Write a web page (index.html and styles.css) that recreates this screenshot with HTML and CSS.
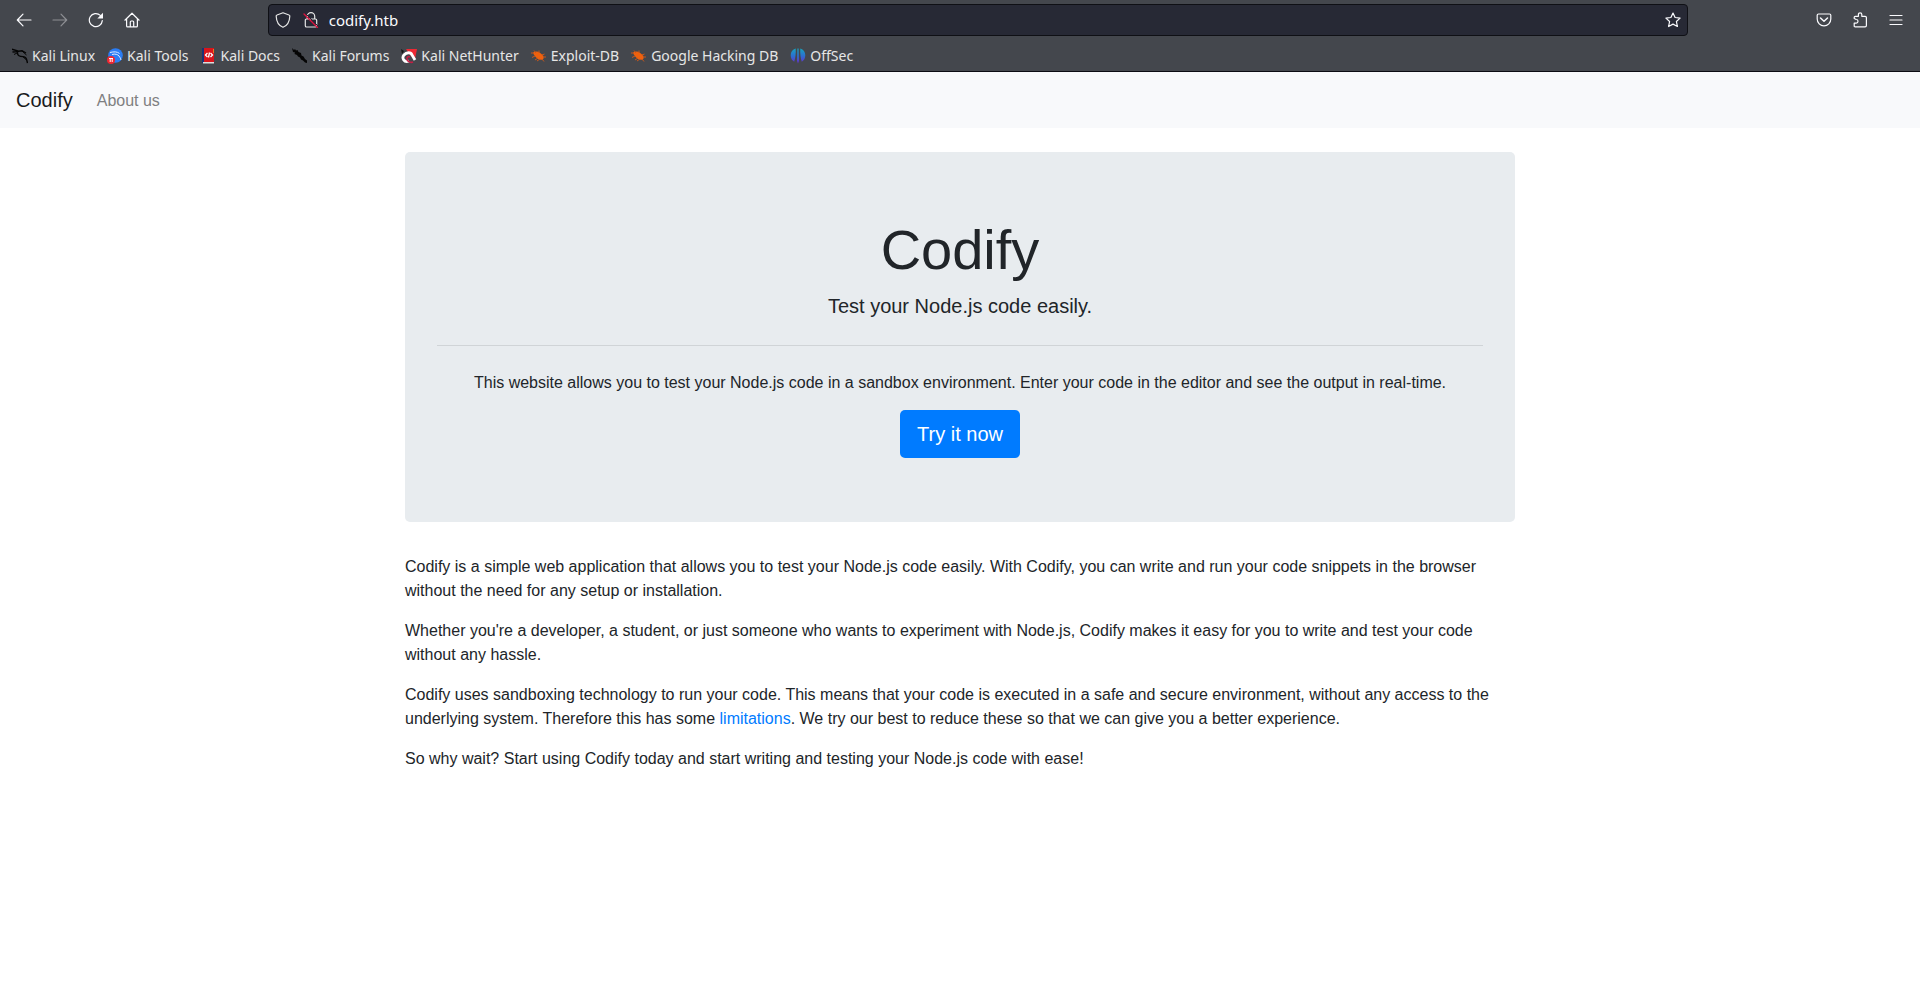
FILE: index.html
```
<!DOCTYPE html>
<html lang="en">
<head>
<meta charset="utf-8">
<title>Codify</title>
<link rel="stylesheet" href="styles.css">
</head>
<body>
<header class="browser">
  <div class="toolbar">
    <button class="tool" aria-label="Back"><svg class="icon" viewBox="0 0 16 16"><path d="M15 8H1.5M7 2.2 1.3 8 7 13.8"/></svg></button>
    <button class="tool tool-off" aria-label="Forward"><svg class="icon" viewBox="0 0 16 16"><path d="M1 8h13.500M9 2.200 14.700 8 9 13.800"/></svg></button>
    <button class="tool" aria-label="Reload"><svg class="icon" viewBox="0 0 16 16"><path d="M14.300 8.600A6.500 6.500 0 1 1 12.300 3.400"/><path class="solid" d="M15 .8V6.500H9.300z"/></svg></button>
    <button class="tool" aria-label="Home"><svg class="icon" viewBox="0 0 16 16"><path d="M.9 8.200 8 1.200l7.100 7M2.600 7v6.900c0 .6.400 1 1 1h8.800c.6 0 1-.4 1-1V7M6.300 14.800V10c0-.6.400-1 1-1h1.400c.6 0 1 .4 1 1v4.800"/></svg></button>
    <div class="spacer"></div>
    <form class="url">
      <svg class="icon" viewBox="0 0 16 16"><path d="M8 .8 14 3c.6.200.9.700.8 1.200C14.600 9.500 12.500 13.500 8 15.300 3.500 13.500 1.400 9.500 1.200 4.200 1.100 3.700 1.400 3.200 2 3z"/></svg>
      <svg class="icon icon-lock" viewBox="0 0 16 16"><path d="M4.300 7V4.300a3.700 3.700 0 0 1 7.400 0V7M3.600 7h8.800c.9 0 1.300.4 1.300 1.300v5.400c0 .9-.4 1.300-1.300 1.300H3.600c-.9 0-1.300-.4-1.300-1.300V8.300C2.300 7.400 2.700 7 3.600 7z"/><path class="gap" d="M2.500 1.500 15.500 14.500"/><path class="slash" d="M1 2 14.500 15.500"/></svg>
      <input class="address" type="text" value="codify.htb" aria-label="Address">
      <button class="star" type="button" aria-label="Bookmark this page"><svg class="icon" viewBox="0 0 16 16"><path d="m8 1 2.100 4.500 5 .6-3.700 3.400 1 5L8 12.100l-4.400 2.400 1-5L.9 6.100l5-.6z"/></svg></button>
    </form>
    <div class="spacer"></div>
    <button class="tool" aria-label="Save to Pocket"><svg class="icon" viewBox="0 0 16 16"><path d="M2.500 2h11c.8 0 1.300.5 1.300 1.300V7a6.800 6.800 0 0 1-13.600 0V3.300C1.200 2.500 1.700 2 2.500 2z"/><path d="M4.500 6 8 9.300 11.500 6" stroke-width="1.500"/></svg></button>
    <button class="tool" aria-label="Extensions"><svg class="icon" viewBox="0 0 16 16"><path d="M2.200 6.500V5.300c0-.6.400-1 1-1h3.200V2.500a1.700 1.700 0 0 1 3.400 0v1.800h3.300c.8 0 1.300.5 1.300 1.300v8c0 .8-.5 1.300-1.300 1.300H3.200c-.6 0-1-.4-1-1v-2.800h2a1.800 1.800 0 0 0 0-3.600z"/></svg></button>
    <button class="tool" aria-label="Open menu"><svg class="icon" viewBox="0 0 16 16"><path d="M2 3.500h12M2 8h12M2 12.500h12"/></svg></button>
  </div>
  <nav class="bookmarks" aria-label="Bookmarks">
    <a class="bookmark" href="#"><svg class="favicon" viewBox="0 0 16 16" fill="none" stroke="#050505"><path stroke-width="1.400" d="M0 1.200 6.500 3.200 10 2.700 14 5M.5 4l6-.5M5.500 4C5 8 8 8.500 11 8.600c3 .2 3.500 2 4.500 6.400"/><path d="m2 6.500 4-2M10 3l4.500 4M11 8.800l3 2.700"/></svg>Kali Linux</a>
    <a class="bookmark" href="#"><svg class="favicon" viewBox="0 0 16 16"><circle cx="8.500" cy="7.500" r="7.300" fill="#2a7df5"/><path d="M3 4.500c4-1 7-1 9.500 1M5 6.500c3-1 6 0 7 1.500s1.500 2 2 4" fill="none" stroke="#dcebff"/><circle cx="4" cy="12" r="4" fill="#ee2631"/><path d="M2 10.500h4M3.200 10.500V14M5.200 10.500V14" fill="none" stroke="#fff"/></svg>Kali Tools</a>
    <a class="bookmark" href="#"><svg class="favicon" viewBox="0 0 16 16"><path fill="#1a3276" d="M1 0h3v15H1z"/><path fill="#d9141b" d="M3 0h10v15H3z"/><path fill="#ed791d" d="M12 1h1v4h-1z"/><path fill="#ddd" d="M2 14h11v1.500H2z"/><path d="M6.500 5 4.500 7l2 2M9.500 5l2 2-2 2M8.500 4.500 7.500 9.500" fill="none" stroke="#fff" stroke-width="1.300"/></svg>Kali Docs</a>
    <a class="bookmark" href="#"><svg class="favicon" viewBox="0 0 16 16"><path fill="#050505" d="M0 0 2 2l1-1 1 1.500L5.500 2l1 2L9 5l.5 2.500 2 1L13 11l2 1.500V15l-2-.5-2-2-2-1-1-2-2-1L5 7 2.500 6 3 4.500 1 4z"/></svg>Kali Forums</a>
    <a class="bookmark" href="#"><svg class="favicon" viewBox="0 0 16 16"><path fill="#ed2934" d="M5 1h11l-2 10-5-4z"/><path fill="#151515" d="m0 1 3 2-2 3z"/><path d="M8 13C3 15 .5 10 3 7s7-3 8 0l3 5" fill="none" stroke="#fff" stroke-width="2.800"/><path d="M9 9c-2-1-3 0-3 2s3 4 6 3" fill="none" stroke="#c61e45" stroke-width="1.700"/></svg>Kali NetHunter</a>
    <a class="bookmark" href="#"><svg class="favicon" viewBox="0 0 16 16"><path d="M2 4.500C6 2 9 4 12 7.500c.8 1.500 1 3.500-.5 4C8 12.500 4 10 2 4.500z" fill="#ef610e"/><path d="m5 5-2-2.500M8 5V2.500M11 7l2.500-1M12 9h3M11 11l2 2.500M7 10l-3 2M4 8 1 9.500M3 5H0M9 11l-3 2" fill="none" stroke="#c9571a" stroke-width="1"/></svg>Exploit-DB</a>
    <a class="bookmark" href="#"><svg class="favicon" viewBox="0 0 16 16"><path d="M2 4.500C6 2 9 4 12 7.500c.8 1.500 1 3.500-.5 4C8 12.500 4 10 2 4.500z" fill="#ef610e"/><path d="m5 5-2-2.500M8 5V2.500M11 7l2.500-1M12 9h3M11 11l2 2.500M7 10l-3 2M4 8 1 9.500M3 5H0M9 11l-3 2" fill="none" stroke="#c9571a" stroke-width="1"/></svg>Google Hacking DB</a>
    <a class="bookmark" href="#"><svg class="favicon" viewBox="0 0 16 16"><defs><linearGradient id="off" gradientUnits="userSpaceOnUse" x1="0" y1="0" x2="0" y2="16"><stop offset="0" stop-color="#16a7bd"/><stop offset=".5" stop-color="#2c6fd0"/><stop offset="1" stop-color="#6d27c9"/></linearGradient></defs><path fill="url(#off)" d="M5.700.5C2.500 1.200.7 4 .7 7.300c0 3 1.300 5.200 3.500 6.500C5.500 10 6 5 5.700.5zM10.300.5c3.200.7 5 3.500 5 6.800 0 3-1.300 5.200-3.500 6.500C10.500 10 10 5 10.300.5zM7.400.5h1.200L9 13l-1 2.500L7 13z"/></svg>OffSec</a>
  </nav>
</header>
<nav class="navbar">
  <a class="brand" href="#">Codify</a>
  <a class="nav-link" href="#">About us</a>
</nav>
<main class="container">
  <section class="jumbotron">
    <h1 class="title">Codify</h1>
    <p class="lead">Test your Node.js code easily.</p>
    <hr class="rule">
    <p>This website allows you to test your Node.js code in a sandbox environment. Enter your code in the editor and see the output in real-time.</p>
    <a class="btn" href="#">Try it now</a>
  </section>
  <p>Codify is a simple web application that allows you to test your Node.js code easily. With Codify, you can write and run your code snippets in the browser without the need for any setup or installation.</p>
  <p>Whether you're a developer, a student, or just someone who wants to experiment with Node.js, Codify makes it easy for you to write and test your code without any hassle.</p>
  <p>Codify uses sandboxing technology to run your code. This means that your code is executed in a safe and secure environment, without any access to the underlying system. Therefore this has some <a class="link" href="#">limitations</a>. We try our best to reduce these so that we can give you a better experience.</p>
  <p>So why wait? Start using Codify today and start writing and testing your Node.js code with ease!</p>
</main>
</body>
</html>
```
FILE: styles.css
```
*, *::before, *::after { box-sizing: border-box; }

body {
  margin: 0;
  background: #fff;
  color: #212529;
  font: 16px/24px "Liberation Sans", Arial, sans-serif;
}

p { margin: 0 0 15px; padding-top: 1px; }
a { text-decoration: none; }

/* Browser chrome */
.browser {
  background: #44474d;
  border-bottom: 1px solid #0c0c12;
  color: #e6e6e6;
  font: 14px/20px "Noto Sans", sans-serif;
}

.toolbar {
  display: flex;
  align-items: center;
  padding: 4px 6px;
}

.tool, .star {
  display: flex;
  align-items: center;
  justify-content: center;
  width: 36px;
  height: 32px;
  padding: 0;
  border: 0;
  background: none;
  color: #fbfbfe;
}

.star { width: 28px; height: 30px; }
.tool-off { opacity: .4; }

.icon {
  flex: none;
  width: 16px;
  height: 16px;
  fill: none;
  stroke: currentColor;
  stroke-width: 1.2;
  stroke-linecap: round;
  stroke-linejoin: round;
}

.icon .solid { fill: currentColor; stroke: none; }
.icon .gap { stroke: #272935; stroke-width: 1; }
.icon .slash { stroke: #e2123f; stroke-width: 1.3; }

.spacer { flex: 1; }

.url {
  display: flex;
  flex: 12;
  align-items: center;
  height: 32px;
  padding-left: 6px;
  background: #272935;
  border: 1px solid #0f1015;
  border-radius: 4px;
}

.icon-lock { margin-left: 12px; }

.address {
  flex: 1;
  min-width: 0;
  margin-left: 10px;
  padding: 0;
  border: 0;
  outline: 0;
  background: none;
  color: #fbfbfe;
  font: inherit;
  font-size: 15px;
}

.bookmarks {
  display: flex;
  gap: 12px;
  padding: 6px 12px 5px;
}

.bookmark {
  display: flex;
  align-items: center;
  gap: 4px;
  color: inherit;
  white-space: nowrap;
}

.favicon { flex: none; width: 16px; height: 16px; }

/* Site */
.navbar {
  display: flex;
  align-items: center;
  gap: 24px;
  padding: 13px 16px;
  background: #f8f9fb;
}

.brand { color: #1a1b1c; font-size: 20px; line-height: 30px; }
.nav-link { padding-top: 2px; color: #7f8081; }

.container {
  max-width: 1140px;
  margin: 24px auto 0;
  padding: 0 15px;
}

.jumbotron {
  margin-bottom: 32px;
  padding: 64px 32px;
  border-radius: 5px;
  background: #e8ecef;
  text-align: center;
}

.title { margin: 0 0 8px; font-size: 56px; font-weight: 300; line-height: 67px; }
.lead { padding-top: 0; font-size: 20px; line-height: 30px; }
.rule { margin: 24px 0; border: 0; border-top: 1px solid #d0d4d7; }

.btn {
  display: inline-block;
  padding: 9px 17px;
  border-radius: 5px;
  background: #007bff;
  color: #fff;
  font-size: 20px;
  line-height: 30px;
  vertical-align: top;
}

.link { color: #007bff; }
```
